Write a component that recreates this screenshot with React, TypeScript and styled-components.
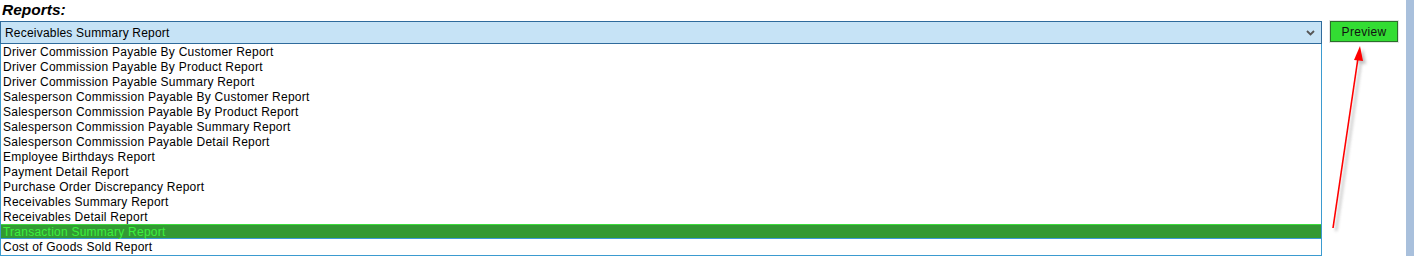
import React from "react";
import styled, { createGlobalStyle } from "styled-components";

const GlobalStyle = createGlobalStyle`
  html, body {
    margin: 0;
    padding: 0;
    background: #ffffff;
    font-family: "Liberation Sans", Arial, sans-serif;
  }
`;

const Page = styled.div`
  position: relative;
  width: 1414px;
  height: 256px;
  display: grid;
  grid-template-columns: 1fr 8px;
  overflow: hidden;
`;

const Main = styled.div`
  display: flex;
  flex-direction: column;
`;

const SideBar = styled.div`
  background-color: #a9c0dc;
`;

const Title = styled.div`
  box-sizing: border-box;
  font-size: 15.5px;
  font-weight: bold;
  font-style: italic;
  color: #000;
  height: 21px;
  padding-top: 2px;
  line-height: 16px;
  padding-left: 2px;
`;

const Row = styled.div`
  display: flex;
  align-items: flex-start;
  gap: 8px;
`;

const SelectColumn = styled.div`
  width: 1322px;
  display: flex;
  flex-direction: column;
`;

const SelectBox = styled.div`
  box-sizing: border-box;
  height: 23px;
  border: 1px solid #2f6b9c;
  background-color: #c6e3f6;
  display: flex;
  align-items: center;
  justify-content: space-between;
  padding: 0 6px 0 4px;
  font-size: 12px;
  letter-spacing: 0.2px;
  color: #000;
`;

const ListBox = styled.div`
  box-sizing: border-box;
  border: 1px solid #3b9bd0;
  border-top: none;
  background: #fff;
  display: flex;
  flex-direction: column;
  padding-bottom: 1px;
`;

const Option = styled.div<{ $selected?: boolean }>`
  box-sizing: border-box;
  height: 15px;
  padding-left: 2px;
  font-size: 12px;
  letter-spacing: 0.24px;
  white-space: nowrap;
  color: ${(p) => (p.$selected ? "#3cf03c" : "#000")};
  background-color: ${(p) => (p.$selected ? "#339933" : "transparent")};
  border-top: ${(p) => (p.$selected ? "1px solid #3ddc3d" : "none")};
  border-bottom: ${(p) => (p.$selected ? "1px solid #3a9ad6" : "none")};
  line-height: ${(p) => (p.$selected ? "14px" : "16px")};
`;

const PreviewButton = styled.button`
  box-sizing: border-box;
  width: 68px;
  height: 21px;
  border: 1px solid #2b6e2b;
  background-color: #33dd33;
  color: #111;
  font-family: "Liberation Sans", Arial, sans-serif;
  font-size: 12px;
  letter-spacing: 0.3px;
  padding: 0;
  box-shadow: 0 0 0 1px #e4e4e4;
  cursor: pointer;
`;

const Annotation = styled.svg`
  position: absolute;
  left: 0;
  top: 0;
  pointer-events: none;
`;

const reports = [
  "Driver Commission Payable By Customer Report",
  "Driver Commission Payable By Product Report",
  "Driver Commission Payable Summary Report",
  "Salesperson Commission Payable By Customer Report",
  "Salesperson Commission Payable By Product Report",
  "Salesperson Commission Payable Summary Report",
  "Salesperson Commission Payable Detail Report",
  "Employee Birthdays Report",
  "Payment Detail Report",
  "Purchase Order Discrepancy Report",
  "Receivables Summary Report",
  "Receivables Detail Report",
  "Transaction Summary Report",
  "Cost of Goods Sold Report",
];

const Chevron = () => (
  <svg width="9" height="6" viewBox="0 0 9 6">
    <path d="M1 1 L4.5 4.5 L8 1" fill="none" stroke="#555" strokeWidth="1.8" />
  </svg>
);

export default function App() {
  return (
    <>
      <GlobalStyle />
      <Page>
        <Main>
          <Title>Reports:</Title>
          <Row>
            <SelectColumn>
              <SelectBox>
                <span>Receivables Summary Report</span>
                <Chevron />
              </SelectBox>
              <ListBox>
                {reports.map((r) => (
                  <Option key={r} $selected={r === "Transaction Summary Report"}>
                    {r}
                  </Option>
                ))}
              </ListBox>
            </SelectColumn>
            <PreviewButton>Preview</PreviewButton>
          </Row>
        </Main>
        <SideBar />
        <Annotation width="1414" height="256" viewBox="0 0 1414 256">
          <defs>
            <filter id="sh" x="-50%" y="-10%" width="200%" height="120%">
              <feGaussianBlur stdDeviation="1.5" />
            </filter>
          </defs>
          <g transform="translate(3,3)" filter="url(#sh)" opacity="0.45">
            <line x1="1333" y1="228" x2="1358" y2="58" stroke="#777" strokeWidth="2" />
            <path d="M1360 46 L1354 60 L1363 61 Z" fill="#777" />
          </g>
          <line x1="1333" y1="228" x2="1358" y2="58" stroke="#ff0000" strokeWidth="1.6" />
          <path d="M1360 46 L1354 60 L1363 61 Z" fill="#ff0000" />
        </Annotation>
      </Page>
    </>
  );
}
